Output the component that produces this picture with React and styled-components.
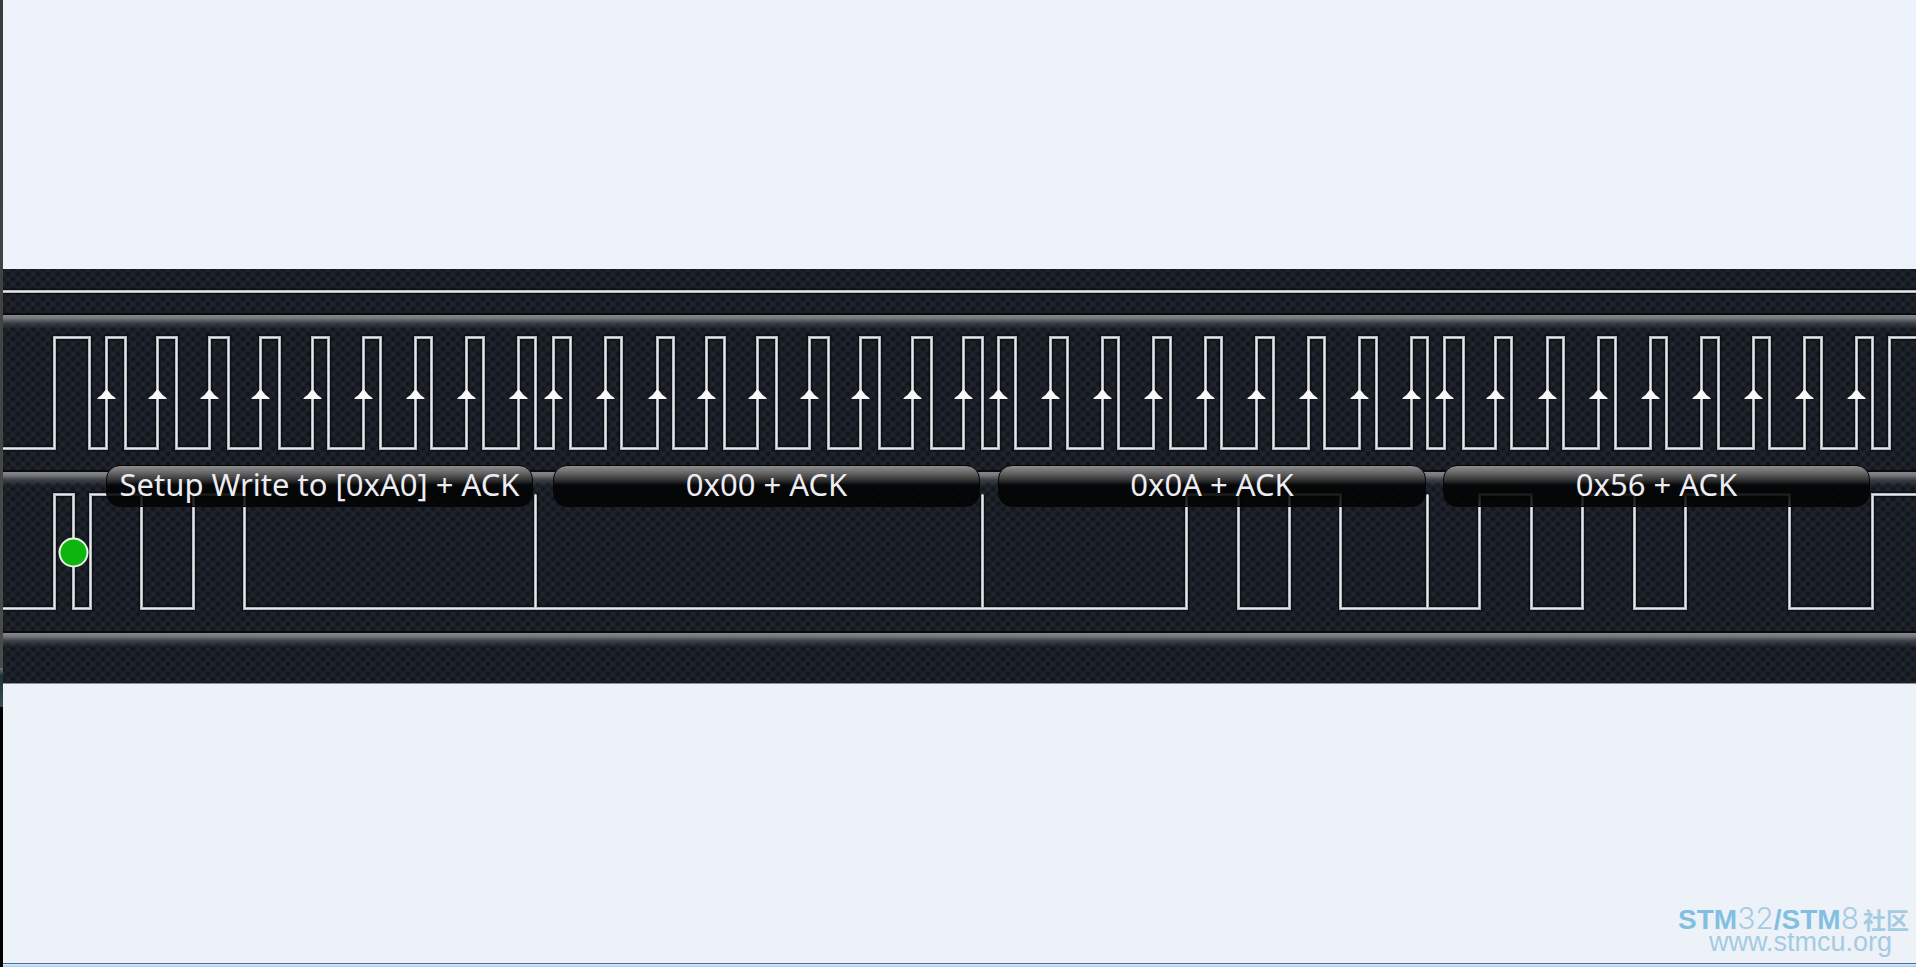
import React from "react";
import styled, { createGlobalStyle } from "styled-components";

const GlobalStyle = createGlobalStyle`
  body {
    margin: 0;
    background: #edf2fa;
    font-family: "Noto Sans", "Open Sans", sans-serif;
  }
`;

const Page = styled.div`
  display: flex;
  min-height: 100vh;
`;

const EdgeStrip = styled.div`
  flex: none;
  width: 3px;
  display: flex;
  flex-direction: column;
  background: #000;
`;

const EdgeSegment = styled.div`
  flex: ${(p) => p.$grow} 0 0;
  background: ${(p) => p.$fill};
`;

const Main = styled.main`
  flex: 1;
  min-width: 0;
  display: flex;
  flex-direction: column;
`;

const Blank = styled.div`
  flex: ${(p) => p.$grow} 0 0;
  background: ${(p) => p.$fill};
`;

const StatusEdge = styled.div`
  height: 3px;
  border-top: 1px solid #4c6f96;
  background: linear-gradient(#dcebfa, #a9cdf0);
`;

const Analyzer = styled.section`
  border-bottom: 1px solid #8d9196;
  background-color: #20252e;
  background-image: radial-gradient(circle, #11151b 0 1px, transparent 4px),
    radial-gradient(circle, #11151b 0 1px, transparent 4px);
  background-size: 10px 10px;
  background-position: 0 0, 5px 5px;
`;

const Channel = styled.div`
  position: relative;
  height: ${(p) => p.$height}px;
  box-sizing: border-box;
  border-top: ${(p) => (p.$first ? "0" : "2px solid #090b0f")};
  background: ${(p) =>
    p.$first
      ? "none"
      : "linear-gradient(#85888b, #777a7e 3px, rgba(70,74,80,0.75) 8px, rgba(28,33,41,0) 14px)"};
`;

const Wave = styled.svg`
  display: block;
  width: 100%;
  height: 100%;

  path {
    fill: none;
    vector-effect: non-scaling-stroke;
  }
`;

const BubbleRow = styled.div`
  position: absolute;
  inset: -7px 0 auto;
  display: grid;
  grid-template-columns: 103fr 427fr 20fr 427fr 18fr 428fr 17fr 427fr 46fr;
`;

const Bubble = styled.div`
  grid-column: ${(p) => p.$column};
  box-sizing: border-box;
  height: 42px;
  border: 1px solid #050607;
  border-radius: 14px;
  background: linear-gradient(
    #8e8e8e,
    #6c6c6c 6px,
    #333 14px,
    rgba(4, 5, 6, 0.96) 19px,
    rgba(0, 0, 0, 0.8)
  );
  color: #ececf2;
  font-size: 31px;
  line-height: 36px;
  text-align: center;
  white-space: nowrap;
`;

const Watermark = styled.footer`
  height: 100%;
  box-sizing: border-box;
  padding: 0 7px 9px 0;
  display: flex;
  flex-direction: column;
  align-items: flex-end;
  justify-content: flex-end;
  color: #a5cbe3;
  font-family: "Liberation Sans", "Noto Sans CJK SC", sans-serif;
`;

const Brand = styled.div`
  display: flex;
  align-items: baseline;
  font-size: 28px;
  line-height: 20px;

  b {
    color: #83bfe1;
  }
`;

const Digits = styled.span`
  font-family: Inter, sans-serif;
  font-size: 30px;
  font-weight: 300;
`;

const Community = styled.span`
  padding-left: 4px;
  font-family: "Noto Sans CJK SC", sans-serif;
  font-size: 23px;
  font-weight: 700;
`;

const Site = styled.a`
  padding-right: 17px;
  color: inherit;
  font-size: 27px;
  line-height: 24px;
  text-decoration: none;
`;

const CLOCK_EDGES = [
  55, 90, 107, 126, 158, 177, 210, 229, 261, 280, 313, 329, 364, 381, 416, 432,
  467, 484, 519, 536, 554, 571, 606, 622, 658, 674, 707, 725, 758, 777, 810,
  829, 861, 880, 913, 932, 964, 983, 999, 1016, 1051, 1068, 1103, 1119, 1154,
  1171, 1206, 1222, 1257, 1274, 1309, 1325, 1360, 1377, 1412, 1428, 1445, 1464,
  1496, 1512, 1548, 1564, 1599, 1616, 1651, 1667, 1702, 1719, 1754, 1770, 1805,
  1822, 1857, 1873, 1890,
];

const DATA_EDGES = [
  55, 74, 91, 142, 194, 245, 536, 536, 983, 983, 1187, 1239, 1290, 1341, 1428,
  1428, 1480, 1532, 1583, 1635, 1686, 1790, 1873,
];

const BUBBLES = [
  "Setup Write to [0xA0] + ACK",
  "0x00 + ACK",
  "0x0A + ACK",
  "0x56 + ACK",
];

// The time axis starts right of the edge strip; half a pixel keeps odd-width strokes crisp.
const ORIGIN = 3.5;
const SPAN = 1913;

function edgePath(edges, high, low) {
  let level = low;
  let d = `M-4 ${low}`;
  edges.forEach((x) => {
    d += `H${x - ORIGIN}`;
    level = level === low ? high : low;
    d += `V${level}`;
  });
  return `${d}H${SPAN + 4}`;
}

function Trace({ d }) {
  return (
    <>
      <path d={d} stroke="#05070a" strokeOpacity="0.55" strokeWidth="6" />
      <path d={d} stroke="#b4b7bb" strokeWidth="3" />
      <path d={d} stroke="#e6e8ea" strokeWidth="1" />
    </>
  );
}

function Arrow({ x, y }) {
  return (
    <polygon
      points={`${x - 9},${y + 9} ${x - 9},${y + 8} ${x - 5},${y + 5} ${x - 1},${y} ${x + 1},${y} ${x + 5},${y + 5} ${x + 9},${y + 8} ${x + 9},${y + 9}`}
      fill="#fafafa"
    />
  );
}

export default function App() {
  const arrows = CLOCK_EDGES.filter((_, i) => i % 2 === 0 && i > 0).slice(0, -1);
  return (
    <>
      <GlobalStyle />
      <Page>
        <EdgeStrip>
          <EdgeSegment $grow={668} $fill="linear-gradient(#3a3c3c, #4a4c4b)" />
          <EdgeSegment $grow={39} $fill="linear-gradient(#6d767c, #1f3038 20%, #3c4b52)" />
          <EdgeSegment $grow={260} $fill="#000" />
        </EdgeStrip>
        <Main>
          <Blank $grow={269} $fill="#edf2fb" />
          <Analyzer>
            <Channel $first $height={44}>
              <Wave viewBox={`0 0 ${SPAN} 44`} preserveAspectRatio="none">
                <Trace d={`M-4 22.5H${SPAN + 4}`} />
              </Wave>
            </Channel>
            <Channel $height={157}>
              <Wave viewBox={`0 0 ${SPAN} 155`} preserveAspectRatio="none">
                <Trace d={edgePath(CLOCK_EDGES, 22.5, 133.5)} />
                {arrows.map((x) => (
                  <Arrow key={x} x={x - ORIGIN} y={75} />
                ))}
              </Wave>
            </Channel>
            <Channel $height={161}>
              <Wave viewBox={`0 0 ${SPAN} 159`} preserveAspectRatio="none">
                <Trace d={edgePath(DATA_EDGES, 22.5, 136.5)} />
                <circle cx="70.5" cy="80.5" r="14" fill="#0cb60c" stroke="#e9f5e9" strokeWidth="2" />
              </Wave>
              <BubbleRow>
                {BUBBLES.map((label, i) => (
                  <Bubble key={label} $column={i * 2 + 2}>
                    {label}
                  </Bubble>
                ))}
              </BubbleRow>
            </Channel>
            <Channel $height={52} />
          </Analyzer>
          <Blank $grow={279} $fill="#edf2f9">
            <Watermark>
              <Brand>
                <b>STM</b>
                <Digits>32</Digits>
                <b>/STM</b>
                <Digits>8</Digits>
                <Community>社区</Community>
              </Brand>
              <Site href="http://www.stmcu.org">www.stmcu.org</Site>
            </Watermark>
          </Blank>
          <StatusEdge />
        </Main>
      </Page>
    </>
  );
}
